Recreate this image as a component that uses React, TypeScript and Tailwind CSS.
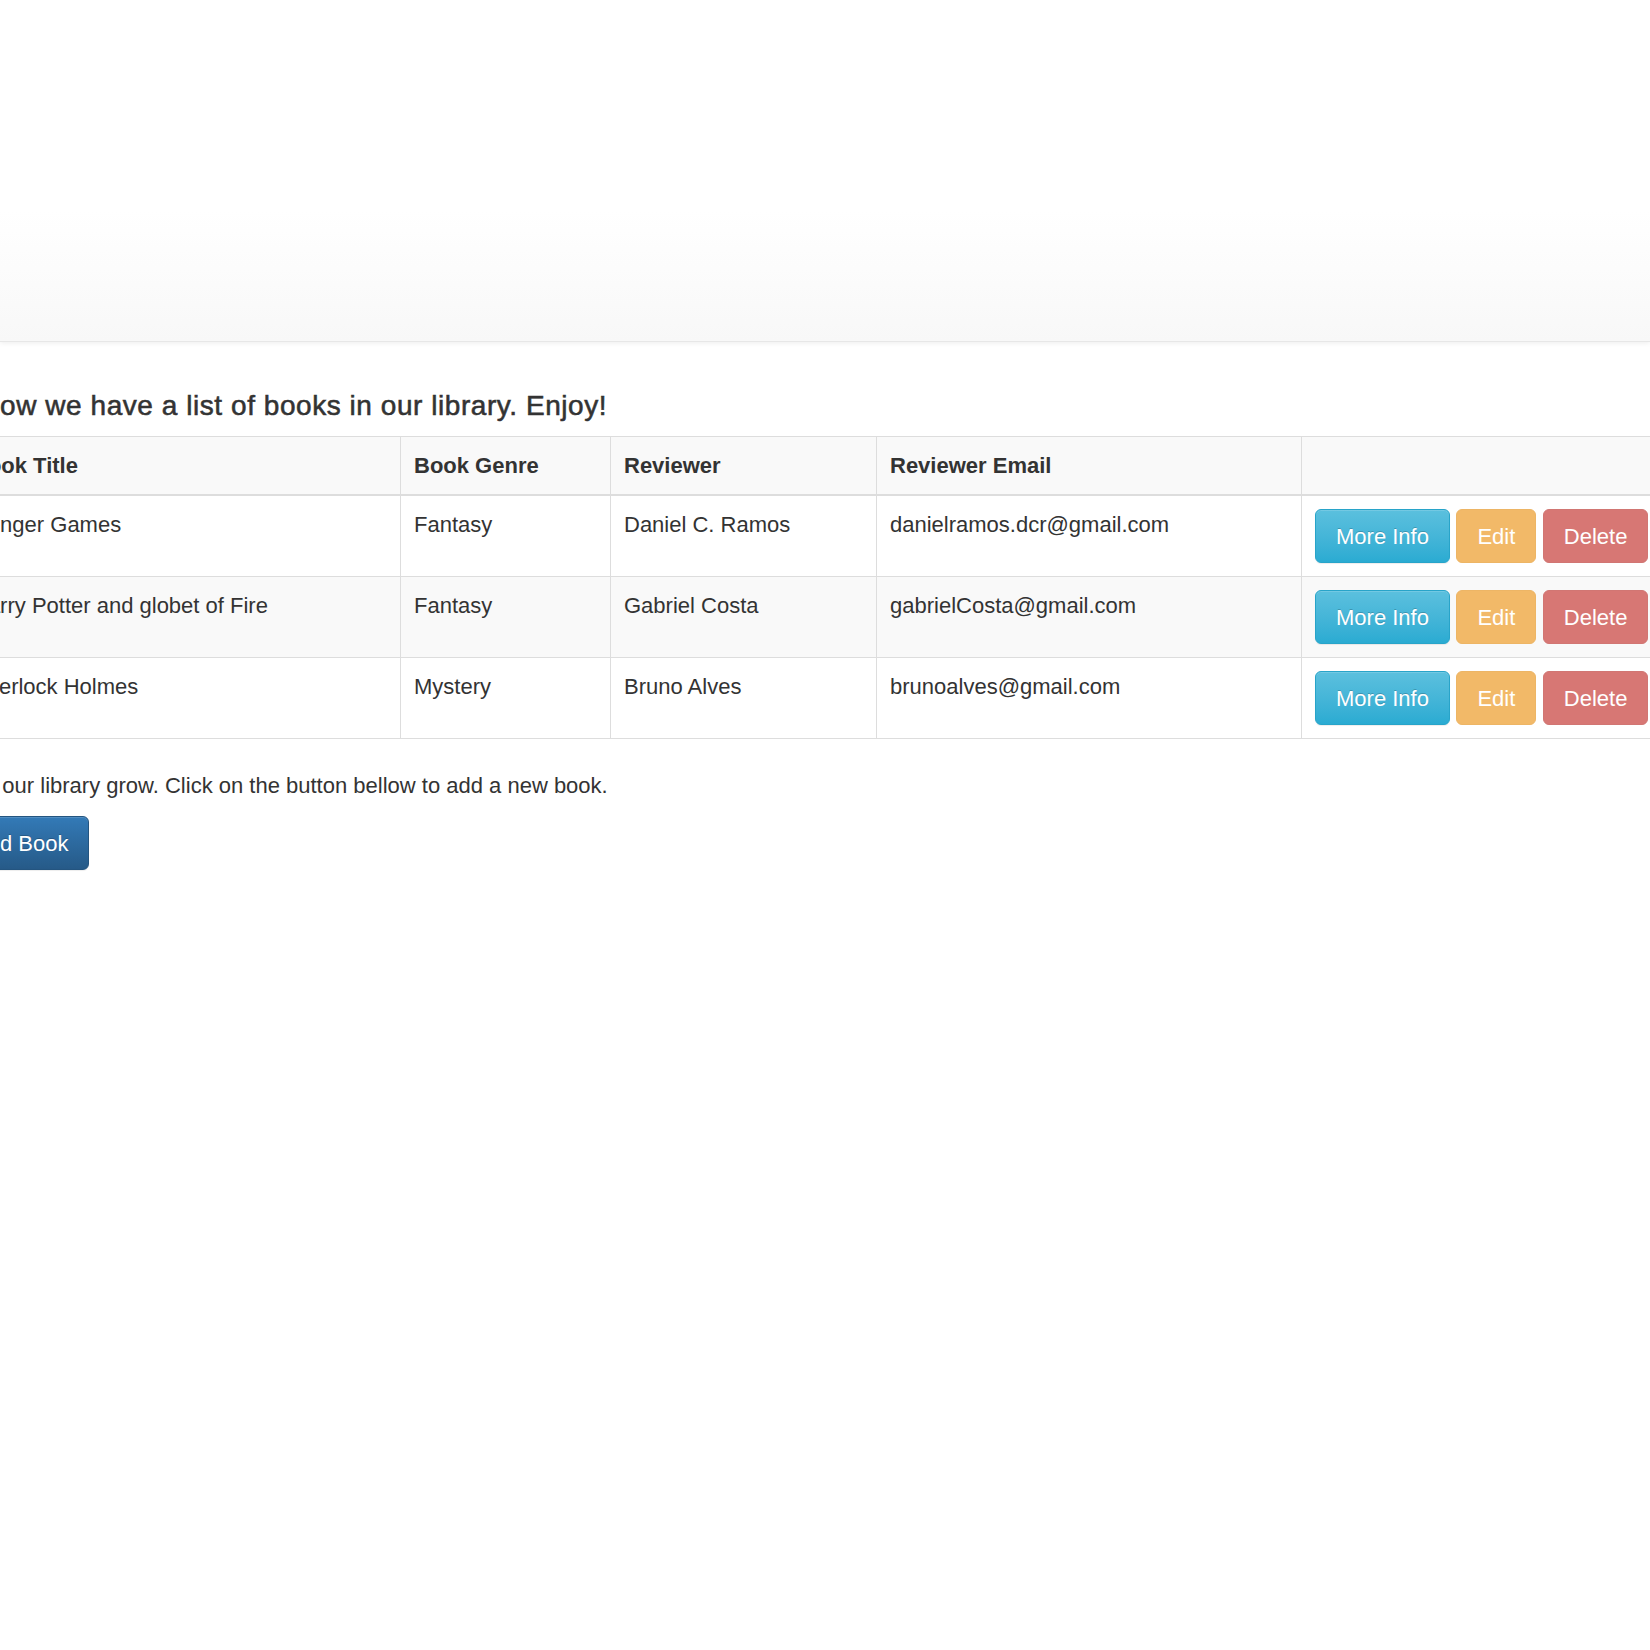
import React from "react";

const rows = [
  { title: "Hunger Games", genre: "Fantasy", reviewer: "Daniel C. Ramos", email: "danielramos.dcr@gmail.com" },
  { title: "Harry Potter and globet of Fire", genre: "Fantasy", reviewer: "Gabriel Costa", email: "gabrielCosta@gmail.com" },
  { title: "Sherlock Holmes", genre: "Mystery", reviewer: "Bruno Alves", email: "brunoalves@gmail.com" },
];

const btnBase =
  "inline-block rounded-[6px] border px-[20px] py-[10.5px] text-[22px] leading-[31px] text-white whitespace-nowrap";

export default function App() {
  return (
    <div
      className="w-[1650px] h-[1650px] overflow-hidden bg-white text-[#333333]"
      style={{ fontFamily: '"Liberation Sans", Arial, Helvetica, sans-serif' }}
    >
      <div className="h-[342px] border-b border-[#e7e7e7] bg-[linear-gradient(to_bottom,#ffffff_0%,#ffffff_62%,#f8f8f8_100%)] shadow-[0_1px_5px_rgba(0,0,0,0.075)]" />
      <div className="ml-[-42px] w-[1770px]">
        <h4 className="mt-[48px] mb-[15px] text-[28px] leading-[31px] font-normal tracking-[0.55px] [-webkit-text-stroke:0.55px_#333333]">
          Below we have a list of books in our library. Enjoy!
        </h4>
        <table className="w-[1763px] table-fixed border-collapse border border-[#dddddd] text-[22px] leading-[31px]">
          <colgroup>
            <col className="w-[442px]" />
            <col className="w-[210px]" />
            <col className="w-[266px]" />
            <col className="w-[425px]" />
            <col className="w-[420px]" />
          </colgroup>
          <thead>
            <tr className="bg-[#f9f9f9]">
              <th className="border border-[#dddddd] border-b-2 px-[13px] py-[13px] text-left align-bottom font-bold">Book Title</th>
              <th className="border border-[#dddddd] border-b-2 px-[13px] py-[13px] text-left align-bottom font-bold">Book Genre</th>
              <th className="border border-[#dddddd] border-b-2 px-[13px] py-[13px] text-left align-bottom font-bold">Reviewer</th>
              <th className="border border-[#dddddd] border-b-2 px-[13px] py-[13px] text-left align-bottom font-bold">Reviewer Email</th>
              <th className="border border-[#dddddd] border-b-2 px-[13px] py-[13px] text-left align-bottom font-bold"></th>
            </tr>
          </thead>
          <tbody>
            {rows.map((r, i) => (
              <tr key={i} className={i === 1 ? "bg-[#f9f9f9]" : "bg-white"}>
                <td className="border border-[#dddddd] px-[13px] py-[13px] align-top">{r.title}</td>
                <td className="border border-[#dddddd] px-[13px] py-[13px] align-top">{r.genre}</td>
                <td className="border border-[#dddddd] px-[13px] py-[13px] align-top">{r.reviewer}</td>
                <td className="border border-[#dddddd] px-[13px] py-[13px] align-top">{r.email}</td>
                <td className="border border-[#dddddd] px-[13px] py-[13px] align-top">
                  <div className="flex gap-[6.5px]">
                    <button
                      className={`${btnBase} border-[#28a4c9] bg-gradient-to-b from-[#5bc0de] to-[#2aabd2] shadow-[inset_0_1px_0_rgba(255,255,255,0.15),0_1px_1px_rgba(0,0,0,0.075)] [text-shadow:0_-1px_0_rgba(0,0,0,0.2)]`}
                    >
                      More Info
                    </button>
                    <button className={`${btnBase} border-[#edb565] bg-[#f2b968]`}>Edit</button>
                    <button className={`${btnBase} border-[#d17673] bg-[#d77774]`}>Delete</button>
                  </div>
                </td>
              </tr>
            ))}
          </tbody>
        </table>
        <p className="mt-[31px] mb-[15px] ml-[-7px] text-[22px] leading-[31px]">
          Help our library grow. Click on the button bellow to add a new book.
        </p>
        <button
          className={`${btnBase} ml-[-6px] border-[#245580] bg-gradient-to-b from-[#337ab7] to-[#265a88] shadow-[inset_0_1px_0_rgba(255,255,255,0.15),0_1px_1px_rgba(0,0,0,0.075)] [text-shadow:0_-1px_0_rgba(0,0,0,0.2)]`}
        >
          Add Book
        </button>
      </div>
    </div>
  );
}
